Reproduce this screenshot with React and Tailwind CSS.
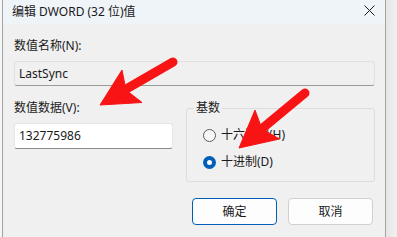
import React from 'react';

const font = { fontFamily: '"Noto Sans", "Noto Sans CJK SC", sans-serif' };

function Radio({ checked, label }) {
  return (
    <label className="flex items-center h-[16px] gap-[5px] text-[12px] leading-[16px] text-[#1a1a1a]">
      {checked ? (
        <span className="w-[13px] h-[13px] rounded-full bg-[#005fb8] flex items-center justify-center">
          <span className="w-[5px] h-[5px] rounded-full bg-white" />
        </span>
      ) : (
        <span className="w-[13px] h-[13px] rounded-full border border-[#5c5c5c] bg-[#f7f7f7]" />
      )}
      <span>{label}</span>
    </label>
  );
}

function Arrows() {
  return (
    <svg className="absolute inset-0 pointer-events-none" width="397" height="237" viewBox="0 0 397 237">
      <g fill="#f81414" stroke="#f81414">
        <line x1="173" y1="62" x2="128" y2="88" strokeWidth="9" strokeLinecap="round" />
        <polygon points="100,105 122,70 126,90 142,102.5" strokeWidth="1" strokeLinejoin="round" />
        <line x1="305" y1="93" x2="264" y2="127" strokeWidth="9" strokeLinecap="round" />
        <polygon points="239,148 255,110 262,129 279.5,139" strokeWidth="1" strokeLinejoin="round" />
      </g>
    </svg>
  );
}

export default function App() {
  return (
    <div className="relative w-[397px] h-[237px] flex overflow-hidden bg-[#f3f3f3]" style={font}>
      <div className="w-[2px] bg-[#f6f6f6]" />

      {/* Dialog */}
      <div className="w-[384px] h-full flex flex-col bg-[#f0f0f0] border-l border-r border-[#a3a3a3]">
        {/* Title bar */}
        <div className="h-[24px] flex items-center justify-between bg-[#eff4f9] pl-[9px] pr-[10px]">
          <span className="text-[12px] text-[#1a1a1a]">编辑 DWORD (32 位)值</span>
          <svg width="11" height="11" viewBox="0 0 11 11" className="mb-[4px]">
            <path d="M0.5 0.5 L10.5 10.5 M10.5 0.5 L0.5 10.5" stroke="#1a1a1a" strokeWidth="1" />
          </svg>
        </div>

        {/* Body */}
        <div className="flex flex-col pl-[11px] pr-[10px] pt-[14px] text-[12px] leading-[16px] text-[#1a1a1a]">
          <span>数值名称(N):</span>
          <div className="mt-[7px] h-[25px] flex items-center px-[4px] bg-[#f0f0f0] border border-[#e0e0e0] border-b-[#9a9a9a] rounded-[3px]">
            LastSync
          </div>

          <div className="mt-[14px] flex gap-[13px]">
            <div className="w-[159px] flex flex-col">
              <span>数值数据(V):</span>
              <div className="mt-[7px] h-[26px] flex items-center px-[4px] bg-white border border-[#e5e5e5] border-b-[#8a8a8a] rounded-[3px]">
                132775986
              </div>
            </div>

            <fieldset className="w-[189px] h-[81px] mt-[1px] border border-[#dcdcdc] rounded-[3px] pl-[16px] pt-[12px] flex flex-col gap-[11px]">
              <legend className="ml-[-9px] px-[2px] leading-[14px]">基数</legend>
              <Radio label="十六进制(H)" />
              <Radio checked label="十进制(D)" />
            </fieldset>
          </div>

          <div className="mt-[16px] flex justify-end gap-[11px] pr-[2px]">
            <button className="w-[85px] h-[27px] rounded-[4px] bg-[#fdfdfd] border-[1.5px] border-[#005fb8] text-[12px]">
              确定
            </button>
            <button className="w-[85px] h-[27px] rounded-[4px] bg-[#fdfdfd] border border-[#d0d0d0] text-[12px]">
              取消
            </button>
          </div>
        </div>
      </div>

      <div className="flex-1 bg-gradient-to-r from-[#e6e6e6] to-[#f0f0f0]" />

      <Arrows />
    </div>
  );
}
